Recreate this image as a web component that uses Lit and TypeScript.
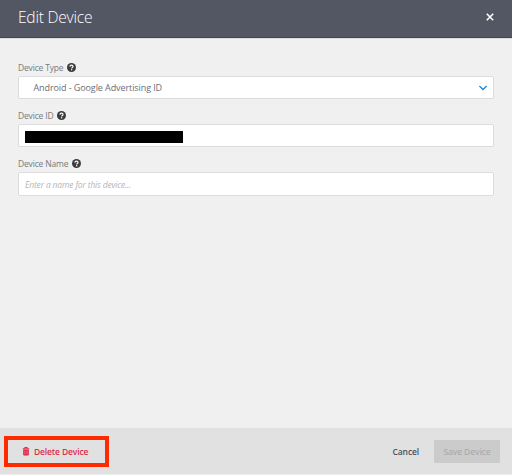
import { LitElement, html, css } from "lit";
import { customElement, property } from "lit/decorators.js";

@customElement("help-icon")
class HelpIcon extends LitElement {
  static styles = css`
    :host { display: block; width: 9px; height: 9px; }
    svg { display: block; }
  `;
  render() {
    return html`<svg width="9" height="9" viewBox="0 0 18 18">
      <circle cx="9" cy="9" r="9" fill="#3c3c3c" />
      <path d="M5.800 7.200C5.900 5.200 7.200 4.200 9 4.200c1.900 0 3.100 1 3.100 2.600 0 2-2.800 2.100-2.800 4.200" fill="none" stroke="#fff" stroke-width="2.300" />
      <rect x="8" y="12.300" width="2.500" height="2.400" fill="#fff" />
    </svg>`;
  }
}

@customElement("form-field")
class FormField extends LitElement {
  @property() label = "";
  static styles = css`
    :host { display: block; }
    .label {
      display: flex; align-items: center; gap: 3.600px; height: 13px; margin-bottom: 2px;
      font-size: 8.500px; letter-spacing: -.17px; line-height: 12px; color: #7a7a7a; white-space: nowrap;
    }
    .control {
      box-sizing: border-box; height: var(--control-height, 23px); display: flex; align-items: center;
      background: #fff; border: 1px solid #dcdcdc; border-radius: 2px; padding: 0 6px;
    }
  `;
  render() {
    return html`
      <div class="label"><span>${this.label}</span><help-icon></help-icon></div>
      <div class="control"><slot></slot></div>`;
  }
}

@customElement("app-root")
class AppRoot extends LitElement {
  static styles = css`
    :host {
      display: flex; flex-direction: column; height: 475px; overflow: hidden;
      background: #f0f0f0; font-family: "Open Sans", "Noto Sans", sans-serif;
    }
    svg { display: block; }
    header {
      box-sizing: border-box; height: 38px; flex: none; display: flex; align-items: center;
      justify-content: space-between; padding: 0 18px 3px; background: #525763;
      border-bottom: 1px solid #3f4654; box-shadow: 0 1px 0 #dcdde0;
    }
    h1 { margin: 0; font-size: 15.600px; letter-spacing: -.24px; line-height: 22px; font-weight: 300; color: #fff; white-space: nowrap; }
    main { flex: 1; display: flex; flex-direction: column; gap: 10.200px; padding: 23px 18px 0; }
    .last { --control-height: 24px; }
    .value { flex: 1; padding-left: 8.500px; font-size: 9px; letter-spacing: -.09px; line-height: 14px; color: #6b6e76; white-space: nowrap; }
    .redacted { width: 158px; height: 12px; margin-top: 3px; background: #000; }
    .placeholder { font-size: 8.500px; letter-spacing: -.16px; line-height: 14px; padding-top: 1px; font-style: italic; color: #b5b5b5; white-space: nowrap; }
    footer {
      position: relative; box-sizing: border-box; height: 47px; flex: none; display: flex; align-items: center;
      padding: 0 12px 0 22px; background: #e1e1e1; border-bottom: 1px solid #ececec;
      font-size: 8.500px; font-weight: 600; letter-spacing: -.13px; white-space: nowrap;
    }
    .delete { display: flex; align-items: center; gap: 4px; flex: 1; color: #dc2c4c; }
    .cancel { color: #4b505c; margin-right: 15px; }
    .save {
      box-sizing: border-box; width: 66px; height: 23px; display: flex; align-items: center; justify-content: center;
      background: #cbcbcb; color: #adadad; border-radius: 1px;
    }
    .highlight { position: absolute; left: 4px; top: 8px; width: 97px; height: 23px; border: 4px solid #ff2a00; }
  `;
  render() {
    return html`
      <header>
        <h1>Edit Device</h1>
        <svg width="8" height="8" viewBox="0 0 8 8"><path d="M.8.8l6.400 6.400M7.200.8L.8 7.200" stroke="#fff" stroke-width="1.600" /></svg>
      </header>
      <main>
        <form-field label="Device Type">
          <span class="value">Android - Google Advertising ID</span>
          <svg width="8" height="6" viewBox="0 0 8 6"><path d="M.4 1L4 4.500 7.600 1" fill="none" stroke="#1686dc" stroke-width="1.300" /></svg>
        </form-field>
        <form-field label="Device ID"><div class="redacted"></div></form-field>
        <form-field class="last" label="Device Name"><span class="placeholder">Enter a name for this device...</span></form-field>
      </main>
      <footer>
        <div class="delete">
          <svg width="8" height="9" viewBox="0 0 8 9">
            <path d="M.7 1.800h6.600M2.700 1.500V.5h2.600v1" fill="none" stroke="#dc1c40" stroke-width=".9" />
            <path d="M1.200 2.400h5.600v5.200q0 .9-.9.9H2.100q-.9 0-.9-.9z" fill="#dc1c40" />
            <path d="M2.700 3.500v4M4 3.500v4M5.300 3.500v4" stroke="#ee9aaa" stroke-width=".5" />
          </svg>
          <span>Delete Device</span>
        </div>
        <span class="cancel">Cancel</span>
        <div class="save">Save Device</div>
        <div class="highlight"></div>
      </footer>`;
  }
}
